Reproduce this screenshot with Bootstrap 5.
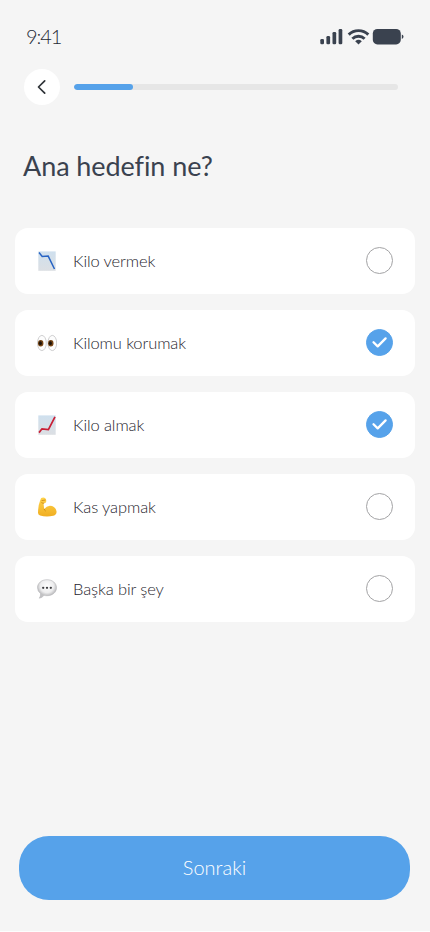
<!DOCTYPE html>
<html lang="tr">
<head>
<meta charset="utf-8">
<meta name="viewport" content="width=device-width, initial-scale=1">
<title>Ana hedefin ne?</title>
<link href="https://cdn.jsdelivr.net/npm/bootstrap@5.3.0/dist/css/bootstrap.min.css" rel="stylesheet">
<style>
  body { background: #f5f5f5; color: #3a424f; font-family: Lato, "Noto Sans", sans-serif; }
  .screen { width: 430px; height: 932px; border-bottom: 1px solid #fdfdfd; overflow: hidden; }
  .status-bar { height: 69px; padding: 4px 26px 0 26px; }
  .clock { font-size: 20px; line-height: 24px; font-weight: 300; color: #252b35; letter-spacing: -1.1px; margin-top: -1px; }
  .top-row { height: 36px; padding: 0 32px 0 24px; gap: 14px; }
  .back-btn { width: 36px; height: 36px; }
  .steps { height: 6px; background: #e6e6e6; border-radius: 3px; }
  .steps .progress-bar { background: #56a2ea; border-radius: 3px; }
  h1.question { font-size: 27px; line-height: 32px; font-weight: 400; letter-spacing: -.08px; margin: 45px 0 0 23px; }
  .options { margin: 46px 15px 0; gap: 16px; }
  .option { height: 66px; border-radius: 13px; padding: 0 22px 1px; font-size: 16.5px; line-height: 22px; font-weight: 300; color: #1f252e; letter-spacing: -.1px; background: #fff; cursor: pointer; }
  .option .emoji { width: 20px; height: 20px; margin-right: 16px; }
  .tick { width: 27px; height: 27px; margin: 0; border: 1px solid #a3a3a5; }
  .option .tick:checked { background-color: #56a2ea; border-color: #56a2ea; background-size: 27px 27px; background-position: center;
    background-image: url("data:image/svg+xml,%3csvg xmlns='http://www.w3.org/2000/svg' viewBox='0 0 27 27'%3e%3cpath d='M7.5 13.2l4.2 4.2 7.9-8' fill='none' stroke='%23fff' stroke-width='2.3' stroke-linecap='round' stroke-linejoin='round'/%3e%3c/svg%3e"); }
  .next-btn { height: 64px; margin: 0 20px 31px 19px; padding: 4px 0 6px; border-radius: 30px; background: #56a2ea; color: #fff; font-size: 20px; font-weight: 300; --bs-btn-hover-bg: #4592dc; }
</style>
</head>
<body>
<main class="screen d-flex flex-column">
  <header class="status-bar d-flex align-items-center justify-content-between flex-shrink-0">
    <span class="clock">9:41</span>
    <svg width="84" height="18" viewBox="320 28 84 18" fill="#3a424f" aria-hidden="true">
      <rect x="320.3" y="39" width="3.7" height="5.2" rx="1.3"/>
      <rect x="326.4" y="36" width="3.7" height="8.2" rx="1.3"/>
      <rect x="332.5" y="32" width="3.7" height="12.2" rx="1.3"/>
      <rect x="338.6" y="29" width="3.7" height="15.2" rx="1.3"/>
      <g fill="none" stroke="#3a424f" stroke-width="2.9">
        <path d="M348.7 34.6a14 14 0 0 1 19.6 0"/>
        <path d="M352.4 38.8a8.6 8.6 0 0 1 12.2 0"/>
      </g>
      <path d="M355.2 41.3a5 5 0 0 1 6.6 0l-3.3 3.3z"/>
      <rect x="372.8" y="29" width="28" height="15.4" rx="4.6"/>
      <path d="M401.8 34.6q1.7.6 1.7 2.2t-1.7 2.2z"/>
    </svg>
  </header>
  <div class="top-row d-flex align-items-center flex-shrink-0">
    <button type="button" class="back-btn btn p-0 border-0 rounded-circle bg-white d-flex align-items-center justify-content-center" aria-label="Geri">
      <svg width="36" height="36" viewBox="0 0 36 36" fill="none" stroke="#2f3338" stroke-width="1.7" stroke-linecap="round" stroke-linejoin="round"><path d="M20.7 11.8l-6.2 6.2 6.2 6.2"/></svg>
    </button>
    <div class="steps progress flex-grow-1" role="progressbar" aria-valuenow="18" aria-valuemin="0" aria-valuemax="100">
      <div class="progress-bar" style="width:18.3%"></div>
    </div>
  </div>
  <h1 class="question">Ana hedefin ne?</h1>
  <div class="options d-flex flex-column">
    <label class="option d-flex align-items-center">
      <svg class="emoji" viewBox="0 0 20 20"><defs><linearGradient id="sheet" x2="0" y2="1"><stop stop-color="#cfe0ee"/><stop offset="1" stop-color="#dcdfe3"/></linearGradient></defs><rect x="1.3" y="0.4" width="17.4" height="19.4" fill="url(#sheet)"/><path d="M2 1.5l3.2 4 6-.4L17.5 18" fill="none" stroke="#2763c4" stroke-width="1.5"/></svg>
      <span>Kilo vermek</span><input class="form-check-input tick rounded-circle ms-auto" type="checkbox">
    </label>
    <label class="option d-flex align-items-center">
      <svg class="emoji" viewBox="0 0 20 20"><g fill="#fdfdfd" stroke="#c9c9cb" stroke-width=".9"><ellipse cx="4.9" cy="10" rx="4.4" ry="7.6"/><ellipse cx="15.3" cy="10" rx="4.4" ry="7.6"/></g><g fill="#754414"><ellipse cx="3.7" cy="10.2" rx="2.7" ry="3.2"/><ellipse cx="13.8" cy="10.2" rx="2.7" ry="3.2"/></g><g fill="#1c1208"><ellipse cx="3.4" cy="10.2" rx="1.5" ry="1.9"/><ellipse cx="13.4" cy="10.2" rx="1.5" ry="1.9"/></g></svg>
      <span>Kilomu korumak</span><input class="form-check-input tick rounded-circle ms-auto" type="checkbox" checked>
    </label>
    <label class="option d-flex align-items-center">
      <svg class="emoji" viewBox="0 0 20 20"><rect x="1.3" y="0.4" width="17.4" height="19.4" fill="url(#sheet)"/><path d="M2 17.6l3-3.8 6.4.8L18 1.8" fill="none" stroke="#c91f35" stroke-width="1.7"/></svg>
      <span>Kilo almak</span><input class="form-check-input tick rounded-circle ms-auto" type="checkbox" checked>
    </label>
    <label class="option d-flex align-items-center">
      <svg class="emoji" viewBox="0 0 20 20"><defs><linearGradient id="skin" x2="0" y2="1"><stop stop-color="#ffd34a"/><stop offset="1" stop-color="#f0ae22"/></linearGradient></defs><path d="M4.2 1.1Q6.5-.1 8.3 1.3 9.8 3 9 5.2q-.8 1.4-2.5 1.1l.7 5.6Q9.5 9 12.8 8.8q5.7.2 6.7 5.5.5 3.6-3.2 4.5-7.3 1.4-13.2-.3Q.9 17.8 1 15.5 1.2 8 3.2 3.2z" fill="url(#skin)"/><path d="M4.6 3.6l3.9-.6M4.4 5.5q1.4.9 2.7.8M7.2 11.9q.2 1.5 1.5 2.2" fill="none" stroke="#c78112" stroke-width=".8"/></svg>
      <span>Kas yapmak</span><input class="form-check-input tick rounded-circle ms-auto" type="checkbox">
    </label>
    <label class="option d-flex align-items-center">
      <svg class="emoji" viewBox="0 0 20 20"><defs><radialGradient id="bubble" cy=".35"><stop stop-color="#fff"/><stop offset=".7" stop-color="#ededee"/><stop offset="1" stop-color="#c2c2c4"/></radialGradient></defs><path d="M10 .7c5.5 0 9.5 3.5 9.5 8s-4 8-9.5 8q-1.6 0-3-.4-1.8 2.5-4.7 2.9 1.5-2 1.3-4.5Q.5 12.3.5 8.7c0-4.5 4-8 9.5-8z" fill="url(#bubble)" stroke="#b5b5b8" stroke-width=".6"/><g fill="#3d3d40"><circle cx="6.2" cy="8.8" r="1.15"/><circle cx="10" cy="8.8" r="1.15"/><circle cx="13.8" cy="8.8" r="1.15"/></g></svg>
      <span>Başka bir şey</span><input class="form-check-input tick rounded-circle ms-auto" type="checkbox">
    </label>
  </div>
  <button type="button" class="next-btn btn border-0 mt-auto flex-shrink-0">Sonraki</button>
</main>
<script src="https://cdn.jsdelivr.net/npm/bootstrap@5.3.0/dist/js/bootstrap.bundle.min.js"></script>
</body>
</html>
